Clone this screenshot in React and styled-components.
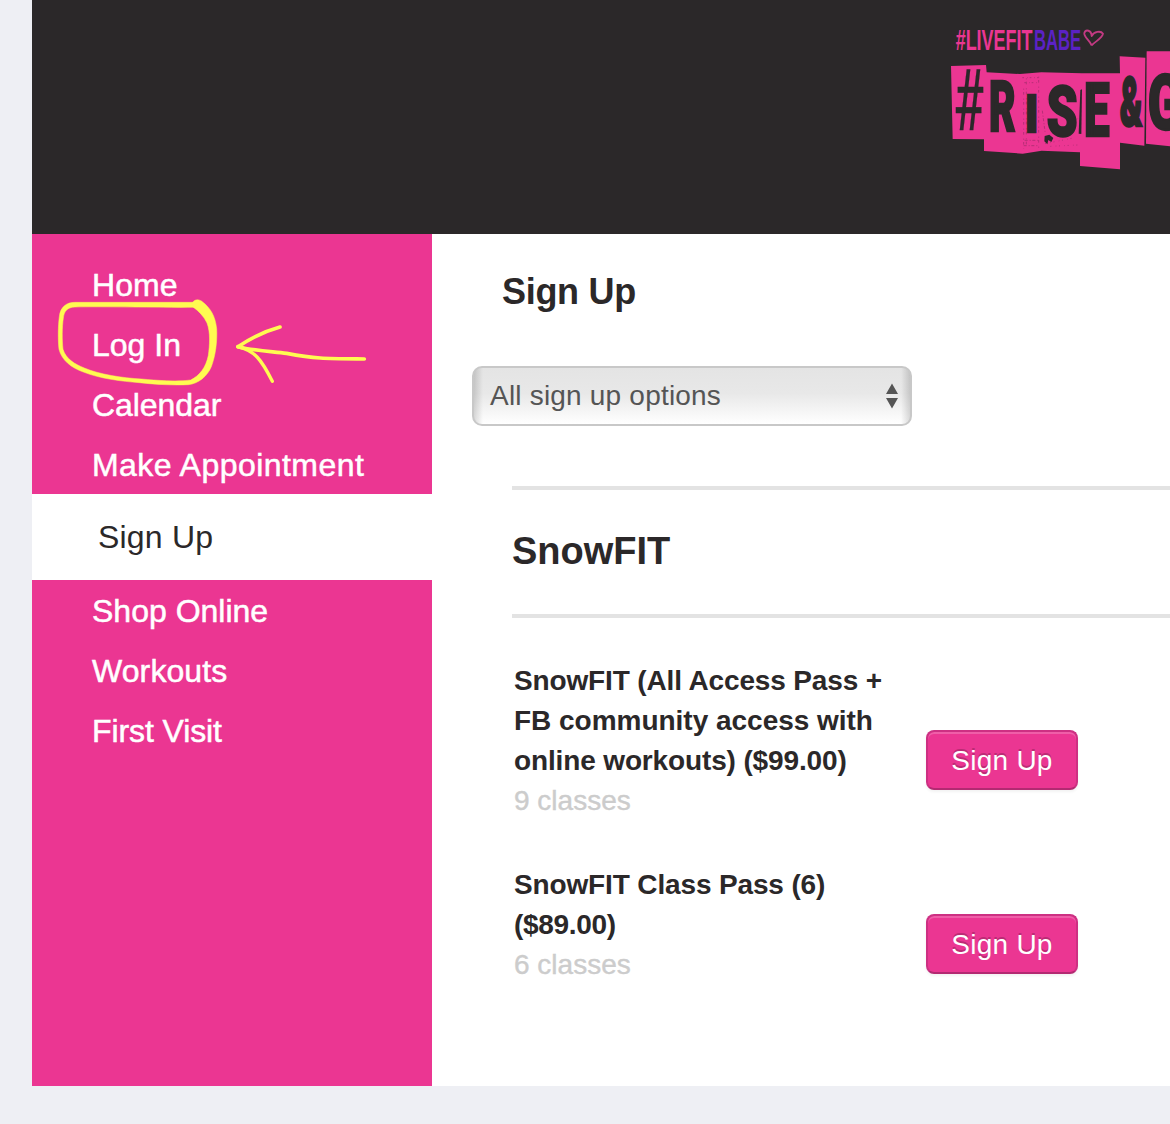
import React from 'react';
import styled, { createGlobalStyle } from 'styled-components';

const GlobalStyle = createGlobalStyle`
    body {
        margin: 0;
        background: #eeeff4;
        color: #2b2829;
        font-family: "Liberation Sans", Arial, sans-serif;
        overflow: hidden;
    }
    * {
        box-sizing: border-box;
    }
`;

const Page = styled.div`
    height: 1086px;
    margin-left: 32px;
    display: flex;
    flex-direction: column;
    background: #fff;
    overflow: hidden;
`;

const Header = styled.header`
    height: 234px;
    flex: none;
    display: flex;
    justify-content: flex-end;
    padding-top: 10px;
    background: #2b2829;
`;

const Columns = styled.div`
    flex: 1;
    display: flex;
`;

const Sidebar = styled.nav`
    position: relative;
    flex: none;
    width: 400px;
    padding-top: 20px;
    background: #eb3692;
`;

const NavItem = styled.a`
    display: flex;
    align-items: center;
    height: ${props => props.$active ? '86px' : '60px'};
    padding-left: ${props => props.$active ? '66px' : '60px'};
    padding-top: ${props => props.$active ? '0' : '2px'};
    background: ${props => props.$active ? '#fff' : 'transparent'};
    color: ${props => props.$active ? '#2b2829' : '#fff'};
    font-size: 32px;
    letter-spacing: ${props => props.$spacing};
    -webkit-text-stroke: ${props => props.$active ? '0' : '0.5px #fff'};
    cursor: pointer;
`;

const Scribble = styled.svg`
    position: absolute;
    left: 8px;
    top: 16px;
    pointer-events: none;
`;

const Content = styled.main`
    flex: 1;
    min-width: 0;
    padding: 36px 0 0 40px;
`;

const Title = styled.h1`
    margin: 0 0 0 30px;
    font-size: 36px;
    line-height: 44px;
    letter-spacing: -0.3px;
`;

const Select = styled.button`
    display: flex;
    align-items: center;
    justify-content: space-between;
    width: 440px;
    height: 60px;
    margin-top: 52px;
    padding: 0 12px 0 16px;
    border: 2px solid #c8c8c8;
    border-radius: 10px;
    background:
        linear-gradient(to right, rgba(0, 0, 0, 0.14), transparent 9px, transparent calc(100% - 9px), rgba(0, 0, 0, 0.14)),
        linear-gradient(#e4e4e4, #e8e8e8 45%, #fff);
    color: #555;
    font-family: inherit;
    font-size: 28px;
    letter-spacing: 0.2px;
`;

const Section = styled.h2`
    display: flex;
    align-items: center;
    height: 132px;
    margin: 60px 0 0 40px;
    padding-bottom: 2px;
    border-top: 4px solid #e3e3e3;
    border-bottom: 4px solid #e3e3e3;
    font-size: 38px;
`;

const Options = styled.div`
    display: flex;
    flex-direction: column;
    gap: 44px;
    padding: 43px 0 0 42px;
`;

const Option = styled.div`
    display: flex;
    align-items: center;
`;

const Info = styled.div`
    width: 412px;
    font-size: 28px;
    line-height: 40px;
`;

const Line = styled.strong`
    display: block;
    white-space: nowrap;
    letter-spacing: ${props => props.$spacing || '-0.14px'};
`;

const Classes = styled.span`
    display: block;
    color: #ccc;
    -webkit-text-stroke: 0.4px #ccc;
`;

const SignUp = styled.button`
    width: 152px;
    height: 60px;
    margin-top: 38px;
    padding: 2px 0 0;
    border: 2px solid #cd3083;
    border-bottom-color: #b32a72;
    border-radius: 8px;
    background: #eb3692;
    box-shadow: inset 0 2px 0 #ef5ea8, 0 2px 3px rgba(0, 0, 0, 0.05);
    color: #fff;
    font-family: inherit;
    font-size: 28px;
    letter-spacing: 0.25px;
    text-shadow: 0 -2px 0 #bc2b75;
    cursor: pointer;
`;

const links = [
    { name: 'Home', spacing: '0.1px' },
    { name: 'Log In', spacing: '0' },
    { name: 'Calendar', spacing: '-0.05px' },
    { name: 'Make Appointment', spacing: '0.45px' },
    { name: 'Sign Up', spacing: '0.2px' },
    { name: 'Shop Online', spacing: '0' },
    { name: 'Workouts', spacing: '0.1px' },
    { name: 'First Visit', spacing: '-0.1px' },
];

const options = [
    {
        lines: [
            { text: 'SnowFIT (All Access Pass +' },
            { text: 'FB community access with', spacing: '-0.02px' },
            { text: 'online workouts) ($99.00)' },
        ],
        classes: '9 classes',
    },
    {
        lines: [
            { text: 'SnowFIT Class Pass (6)' },
            { text: '($89.00)', spacing: '-0.3px' },
        ],
        classes: '6 classes',
    },
];

// letters of the poster line, each one squeezed onto its own paper scrap
const letters = [
    { char: 'R', x: 177, y: 363, sx: 0.58, size: 211 },
    { char: 'I', x: 285, y: 367, sx: 0.84, size: 156 },
    { char: 'S', x: 350, y: 378, sx: 0.7, size: 211 },
    { char: 'E', x: 462, y: 378, sx: 0.61, size: 225 },
    { char: '&', x: 569, y: 349, sx: 0.5, size: 203 },
    { char: 'G', x: 653, y: 358, sx: 0.66, size: 228 },
];

const Logo = () => (
    <svg width="240" height="180" viewBox="0 0 720 540" fontFamily="Liberation Sans, Arial, sans-serif" fontWeight="700">
        <text transform="translate(77 120) scale(0.605 1)" fontSize="89" fill="#eb3692">#LIVEFIT</text>
        <text transform="translate(312 120) scale(0.56 1)" fontSize="89" fill="#5b22c4">BABE</text>
        <path d="M485 106C479 91 460 79 463 69C467 57 484 60 485 78C492 65 512 61 519 71C517 85 497 93 485 106" fill="none" stroke="#c33a82" strokeWidth="5.5" strokeLinejoin="round" />
        <g fill="#eb3692">
            <path d="M63 168L168 165L170 187L270 192L334 187L456 190L570 190L569 139L646 143L643 407L570 398L570 478L450 468L450 427L335 422L278 431L162 423L162 388L68 387Z" />
            <path d="M650 124L720 124V409L648 401Z" />
        </g>
        <g fill="none" stroke="#a72d6e" strokeWidth="3" opacity="0.75">
            <path d="M277 203H329M283 218H326" strokeDasharray="5 9 2 6" />
            <path d="M281 236V417M289 205V415M326 200V418" strokeDasharray="3 7 8 12" />
            <path d="M284 391H328M281 407H326M337 302L345 365" strokeDasharray="9 6 3 5" />
            <path d="M345 401L430 384M361 409L442 405M423 346L443 326" strokeDasharray="3 13 2 8" />
        </g>
        <g fill="#2b2829" stroke="#2b2829">
            <text transform="translate(69 359) scale(0.67 1)" fontFamily="Roboto, sans-serif" fontSize="258" fontWeight="400" textLength="138" lengthAdjust="spacingAndGlyphs" strokeWidth="1">#</text>
            {letters.map(l => (
                <text key={l.char} transform={`translate(${l.x} ${l.y}) scale(${l.sx} 1)`} fontFamily="Roboto, sans-serif" fontWeight="900" fontSize={l.size} strokeWidth="7">{l.char}</text>
            ))}
        </g>
        <g fill="#2b2829">
            <path d="M451 240L456 238L454 372L446 371Z" />
            <path d="M344 378L358 374L370 384L364 396L355 390L352 403L343 394Z" />
        </g>
    </svg>
);

const Annotation = () => (
    <Scribble width="350" height="250" viewBox="0 0 1050 750">
        <path
            d="M463 157H105C80 157 61 170 58 200C54 228 54 272 57 298C65 331 95 354 130 366C180 386 245 394 298 398C350 404 405 406 445 404C476 401 502 378 514 350C527 316 532 273 530 236C526 198 511 174 488 156C480 149 467 145 458 157L459 171C476 183 491 198 501 219C512 248 509 286 505 316C498 352 479 377 452 390C410 396 350 391 304 387C248 384 177 373 133 354C105 343 78 327 69 298C66 272 66 230 70 205C72 184 81 172 105 171C180 169 350 173 463 172Z"
            fill="#fffb51"
            stroke="#fffb51"
            strokeWidth="1.5"
        />
        <g fill="none" stroke="#fffb51" strokeLinecap="round" strokeLinejoin="round">
            <path d="M720 231C680 242 630 266 594 290" strokeWidth="11" />
            <path d="M594 290C640 302 690 304 740 310C830 327 860 326 973 327" strokeWidth="11" />
            <path d="M594 290C644 302 664 328 697 394" strokeWidth="10" />
        </g>
    </Scribble>
);

class App extends React.Component {

    state = {
        active: 'Sign Up',
    };

    select = (name) => {
        this.setState({ active: name });
    };

    render() {
        return (
            <Page>
                <GlobalStyle />
                <Header>
                    <Logo />
                </Header>
                <Columns>
                    <Sidebar>
                        {links.map(link => (
                            <NavItem
                                key={link.name}
                                $active={this.state.active === link.name}
                                $spacing={link.spacing}
                                onClick={() => this.select(link.name)}
                            >
                                {link.name}
                            </NavItem>
                        ))}
                        <Annotation />
                    </Sidebar>
                    <Content>
                        <Title>Sign Up</Title>
                        <Select>
                            All sign up options
                            <svg width="12" height="26" viewBox="0 0 12 26" fill="#555">
                                <path d="M6 0.5L12 11H0ZM0 15H12L6 25.5Z" />
                            </svg>
                        </Select>
                        <Section>SnowFIT</Section>
                        <Options>
                            {options.map(option => (
                                <Option key={option.classes}>
                                    <Info>
                                        {option.lines.map(line => (
                                            <Line key={line.text} $spacing={line.spacing}>{line.text}</Line>
                                        ))}
                                        <Classes>{option.classes}</Classes>
                                    </Info>
                                    <SignUp>Sign Up</SignUp>
                                </Option>
                            ))}
                        </Options>
                    </Content>
                </Columns>
            </Page>
        );
    }
}

export default App;
